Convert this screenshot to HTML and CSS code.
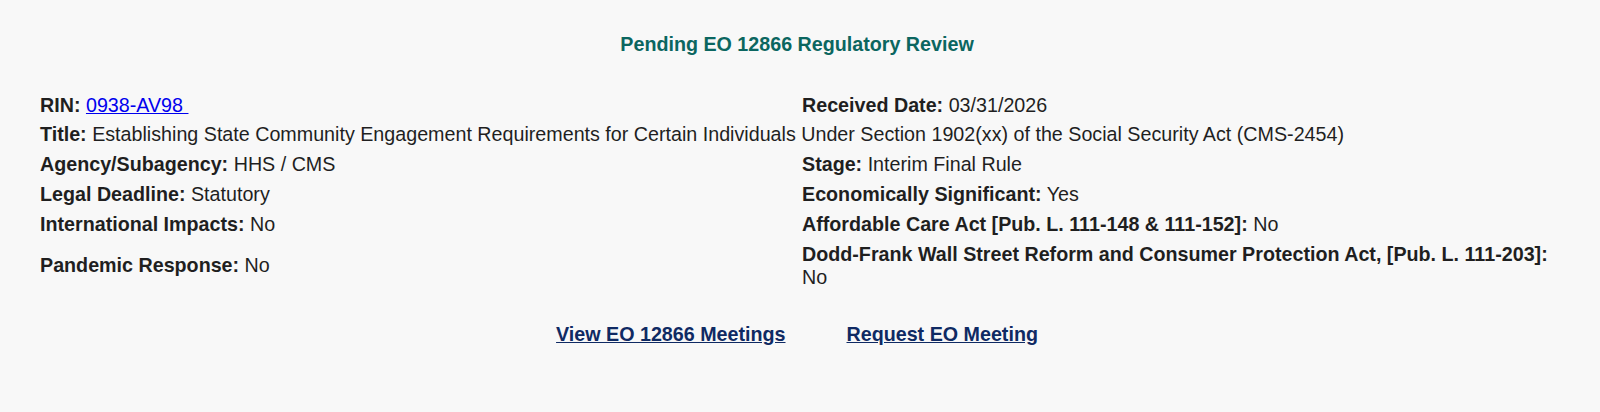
FILE: index.html
```html
<!DOCTYPE html>
<html>
<head>
<meta charset="utf-8">
<link rel="stylesheet" href="styles.css">
</head>
<body>
<div class="page">
  <h2 class="heading">Pending EO 12866 Regulatory Review</h2>
  <div class="grid">
    <div class="cell"><b>RIN:</b> <a class="rin" href="#">0938-AV98&nbsp;</a></div>
    <div class="cell"><b>Received Date:</b> 03/31/2026</div>
    <div class="cell span"><b>Title:</b> Establishing State Community Engagement Requirements for Certain Individuals Under Section 1902(xx) of the Social Security Act (CMS-2454)</div>
    <div class="cell"><b>Agency/Subagency:</b> HHS / CMS</div>
    <div class="cell"><b>Stage:</b> Interim Final Rule</div>
    <div class="cell"><b>Legal Deadline:</b> Statutory</div>
    <div class="cell"><b>Economically Significant:</b> Yes</div>
    <div class="cell"><b>International Impacts:</b> No</div>
    <div class="cell"><b>Affordable Care Act [Pub. L. 111-148 &amp; 111-152]:</b> No</div>
    <div class="cell mid"><b>Pandemic Response:</b> No</div>
    <div class="cell"><b>Dodd-Frank Wall Street Reform and Consumer Protection Act, [Pub. L. 111-203]:</b> No</div>
  </div>
  <div class="links">
    <a href="#">View EO 12866 Meetings</a>
    <a href="#">Request EO Meeting</a>
  </div>
</div>
</body>
</html>
```

FILE: styles.css
```css
html, body {
  margin: 0;
  padding: 0;
  background: #f8f8f8;
}
body {
  font-family: "Liberation Sans", Arial, sans-serif;
  color: #1f1f1f;
  font-size: 19.7px;
  line-height: 23.4px;
}
.page {
  width: 1600px;
  height: 412px;
  padding-top: 33px;
  box-sizing: border-box;
}
.heading {
  margin: 0 6px 0 0;
  text-align: center;
  font-size: 19.7px;
  line-height: 23.4px;
  font-weight: bold;
  color: #0b6660;
}
.grid {
  display: grid;
  grid-template-columns: 762px 760px;
  padding: 34px 38px 0 40px;
}
.cell {
  padding: 3.2px 0;
}
.cell b {
  font-weight: bold;
}
.span {
  grid-column: 1 / span 2;
}
.mid {
  align-self: center;
}
.rin {
  color: #0000ee;
  text-decoration: underline;
}
.links {
  display: flex;
  justify-content: center;
  gap: 61px;
  margin-top: 30px;
  padding-right: 6px;
}
.links a {
  color: #0f2a63;
  font-weight: bold;
  text-decoration: underline;
}
```
